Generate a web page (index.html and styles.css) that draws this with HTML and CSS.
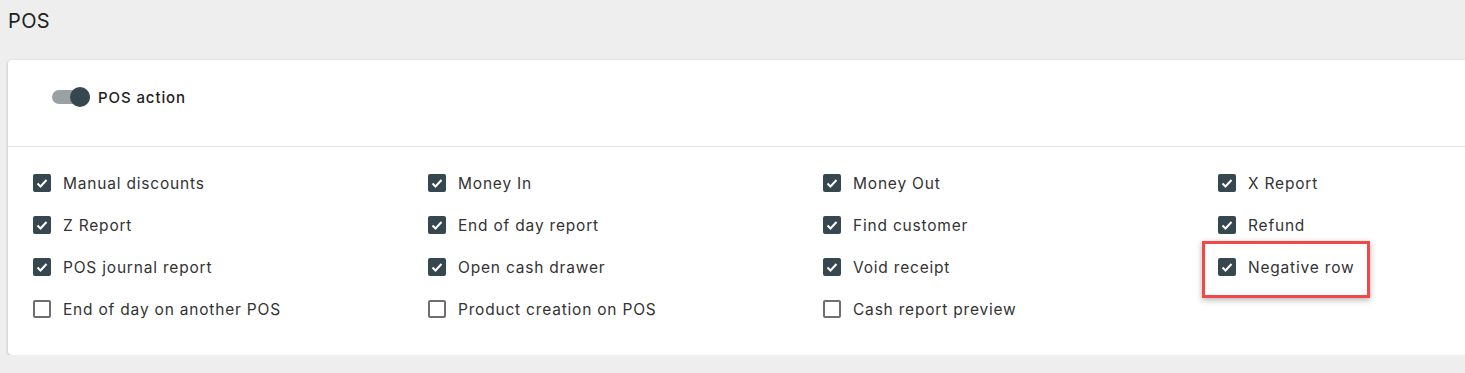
FILE: index.html
```html
<!DOCTYPE html>
<html lang="en">
<head>
  <meta charset="UTF-8">
  <meta name="viewport" content="width=device-width, initial-scale=1.0">
  <title>POS</title>
  <link rel="stylesheet" href="styles.css">
</head>
<body>
  <h1 class="page-title">POS</h1>

  <section class="card">
    <div class="card-head">
      <span class="toggle on"><span class="knob"></span></span>
      <span class="toggle-label">POS action</span>
    </div>

    <div class="options">
      <label class="option"><span class="box checked"><svg viewBox="0 0 18 18"><polyline points="4.5,9.5 7.5,12.5 13.5,6"/></svg></span>Manual discounts</label>
      <label class="option"><span class="box checked"><svg viewBox="0 0 18 18"><polyline points="4.5,9.5 7.5,12.5 13.5,6"/></svg></span>Money In</label>
      <label class="option"><span class="box checked"><svg viewBox="0 0 18 18"><polyline points="4.5,9.5 7.5,12.5 13.5,6"/></svg></span>Money Out</label>
      <label class="option"><span class="box checked"><svg viewBox="0 0 18 18"><polyline points="4.5,9.5 7.5,12.5 13.5,6"/></svg></span>X Report</label>

      <label class="option"><span class="box checked"><svg viewBox="0 0 18 18"><polyline points="4.5,9.5 7.5,12.5 13.5,6"/></svg></span>Z Report</label>
      <label class="option"><span class="box checked"><svg viewBox="0 0 18 18"><polyline points="4.5,9.5 7.5,12.5 13.5,6"/></svg></span>End of day report</label>
      <label class="option"><span class="box checked"><svg viewBox="0 0 18 18"><polyline points="4.5,9.5 7.5,12.5 13.5,6"/></svg></span>Find customer</label>
      <label class="option"><span class="box checked"><svg viewBox="0 0 18 18"><polyline points="4.5,9.5 7.5,12.5 13.5,6"/></svg></span>Refund</label>

      <label class="option"><span class="box checked"><svg viewBox="0 0 18 18"><polyline points="4.5,9.5 7.5,12.5 13.5,6"/></svg></span>POS journal report</label>
      <label class="option"><span class="box checked"><svg viewBox="0 0 18 18"><polyline points="4.5,9.5 7.5,12.5 13.5,6"/></svg></span>Open cash drawer</label>
      <label class="option"><span class="box checked"><svg viewBox="0 0 18 18"><polyline points="4.5,9.5 7.5,12.5 13.5,6"/></svg></span>Void receipt</label>
      <label class="option highlighted"><span class="box checked"><svg viewBox="0 0 18 18"><polyline points="4.5,9.5 7.5,12.5 13.5,6"/></svg></span>Negative row</label>

      <label class="option"><span class="box"></span>End of day on another POS</label>
      <label class="option"><span class="box"></span>Product creation on POS</label>
      <label class="option"><span class="box"></span>Cash report preview</label>
    </div>
  </section>
</body>
</html>
```

FILE: styles.css
```css
/* base */
body {
  margin: 0;
  padding: 0 0 0 8px;
  background-color: #eeeeee;
  color: #2b2b2b;
  font-family: 'Inter', 'Noto Sans', sans-serif;
}

.page-title {
  margin: 0;
  height: 60px;
  padding-top: 9px;
  box-sizing: border-box;
  font-size: 20px;
  font-weight: 400;
  letter-spacing: 0.4px;
  color: #222;
}

/* card */
.card {
  background-color: #fff;
  border-radius: 4px 0 0 4px;
  box-shadow: 0 1px 3px rgba(0, 0, 0, 0.28);
}

.card-head {
  height: 87px;
  box-sizing: border-box;
  display: flex;
  align-items: center;
  padding: 0 0 12px 44px;
  border-bottom: 1px solid #e3e3e3;
}

.toggle {
  position: relative;
  width: 38px;
  height: 14px;
  border-radius: 7px;
  background-color: #9aa1a5;
  margin-right: 8px;
}

.toggle .knob {
  position: absolute;
  right: 0;
  top: -3px;
  width: 20px;
  height: 20px;
  border-radius: 50%;
  background-color: #37474f;
}

.toggle-label {
  font-size: 15px;
  font-weight: 500;
  letter-spacing: 0.9px;
  color: #222;
}

/* options grid */
.options {
  display: grid;
  grid-template-columns: 395px 395px 395px 1fr;
  grid-auto-rows: 42px;
  padding: 15px 0 25px 25px;
}

.option {
  position: relative;
  display: flex;
  align-items: center;
  font-size: 15.5px;
  letter-spacing: 0.8px;
  color: #333;
}

.box {
  width: 18px;
  height: 18px;
  box-sizing: border-box;
  border: 2px solid #6f6f6f;
  border-radius: 2px;
  margin-right: 12px;
  flex-shrink: 0;
}

.box.checked {
  background-color: #37474f;
  border-color: #37474f;
}

.box svg {
  display: block;
  width: 18px;
  height: 18px;
  margin: -2px;
  fill: none;
  stroke: #fff;
  stroke-width: 2;
}

/* annotation frame */
.highlighted::after {
  content: "";
  position: absolute;
  left: -16px;
  top: -5px;
  width: 168px;
  height: 57px;
  box-sizing: border-box;
  border: 3px solid #f44848;
  box-shadow: 0 2px 6px rgba(0, 0, 0, 0.3);
}
```
